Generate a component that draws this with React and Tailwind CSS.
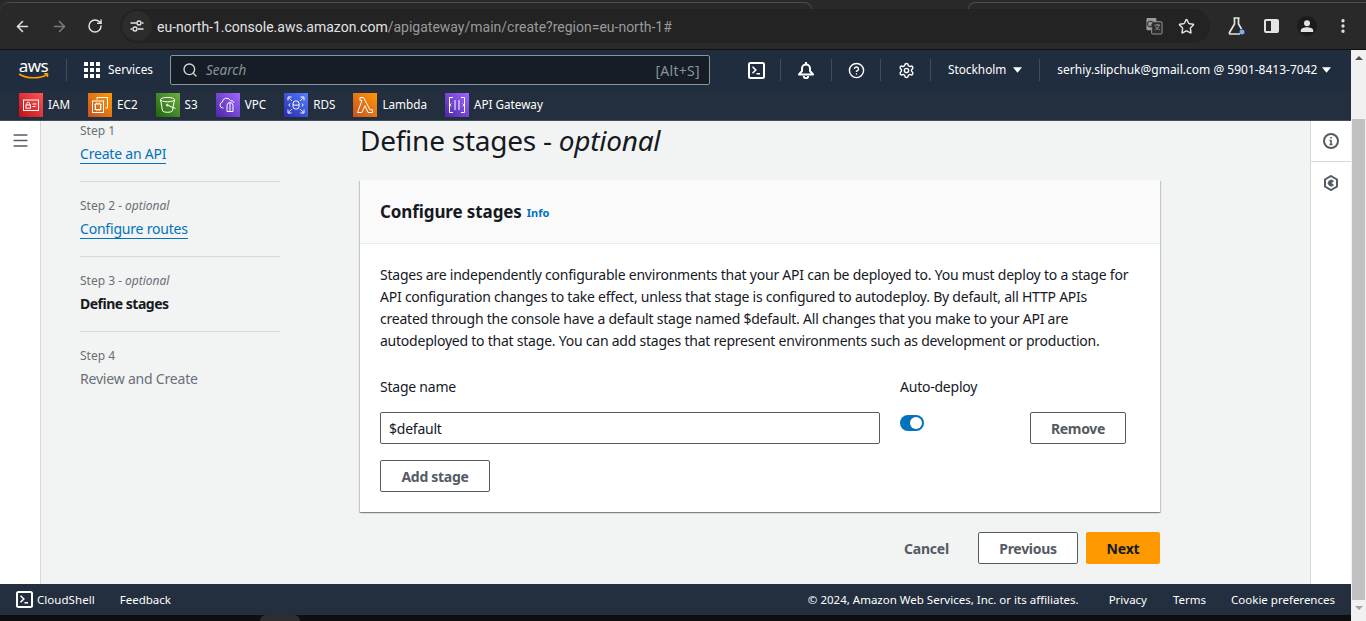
import { ArrowLeft, ArrowRight, RotateCw, Star, Search, HelpCircle, Settings, Menu, EllipsisVertical } from 'lucide-react';

const shortcuts = [
  { name: 'IAM', tile: 'from-[#bd0816] to-[#ff5252]', icon: 'iam' },
  { name: 'EC2', tile: 'from-[#c8511b] to-[#ff9900]', icon: 'ec2' },
  { name: 'S3', tile: 'from-[#1b660f] to-[#6cae3e]', icon: 's3' },
  { name: 'VPC', tile: 'from-[#4d27a8] to-[#a166ff]', icon: 'vpc' },
  { name: 'RDS', tile: 'from-[#2e27ad] to-[#527fff]', icon: 'rds' },
  { name: 'Lambda', tile: 'from-[#c8511b] to-[#ff9900]', icon: 'lambda' },
  { name: 'API Gateway', tile: 'from-[#4d27a8] to-[#a166ff]', icon: 'api' },
];

function TileIcon({ icon }) {
  const common = { width: 18, height: 18, viewBox: '0 0 18 18', fill: 'none', stroke: 'white', strokeWidth: 1 };
  if (icon === 'iam') return (
    <svg {...common}>
      <rect x="1.5" y="4" width="15" height="10.5" />
      <rect x="4" y="9" width="4.5" height="3.2" />
      <path d="M4.9 9V7.6a1.3 1.3 0 0 1 2.7 0V9M10.5 8h4M10.5 10.5h3" />
    </svg>
  );
  if (icon === 'ec2') return (
    <svg {...common}>
      <path d="M6 3.5V1.5h10.5V12h-2" />
      <rect x="1.5" y="5" width="11" height="11.5" />
      <rect x="4.5" y="8" width="5" height="5.5" />
      <path d="M3 8.5h1.5M3 10.7h1.5M3 13h1.5M9.5 8.5H11M9.5 10.7H11M9.5 13H11M5.5 6.5V8M7 6.5V8M8.5 6.5V8M5.5 13.5V15M7 13.5V15M8.5 13.5V15" strokeWidth="0.7" />
    </svg>
  );
  if (icon === 's3') return (
    <svg {...common}>
      <ellipse cx="8.5" cy="3.6" rx="7" ry="2.2" />
      <path d="M1.5 3.6 3.6 15a5 1.6 0 0 0 9.8 0l2.1-11.4" />
      <path d="M8.5 9.2 16.5 12.5" />
      <circle cx="8.3" cy="9.1" r="0.9" />
    </svg>
  );
  if (icon === 'vpc') return (
    <svg {...common}>
      <path d="M4.5 12H3.8a3 3 0 0 1-.5-5.9 4.2 4.2 0 0 1 8-1.5 3.2 3.2 0 0 1 3.7 2.3" />
      <path d="M8 15.5V9.5a3 3 0 0 1 6 0v6z" />
      <path d="M11 7v8.500" />
    </svg>
  );
  if (icon === 'rds') return (
    <svg {...common}>
      <path d="M1 4.500V1h3.500M13.500 1H17v3.500M17 13.500V17h-3.500M4.500 17H1v-3.500" />
      <path d="M1.500 1.500 5 5M16.500 1.500 13 5M16.500 16.500 13 13M1.500 16.500 5 13" strokeWidth="0.8" />
      <rect x="6" y="5" width="6" height="8" rx="2.500" />
      <path d="M6 8.500c1.500 1 4.500 1 6 0M3 7.500 1.800 9 3 10.500M15 7.500 16.200 9 15 10.500" />
    </svg>
  );
  if (icon === 'lambda') return (
    <svg {...common}>
      <path d="M1.500 16.500h4.300l3.200-6.800 3 6.800h4.500v-2.800h-2.500L7.500 1.500H4v2.800h2z" />
    </svg>
  );
  return (
    <svg {...common}>
      <path d="M5 1.500H1.500v15H5M13 1.500h3.500v15H13" />
      <path d="M7 4v10M11 4v10" />
      <path d="M3.500 7.500 2 9l1.500 1.500M14.500 7.500 16 9l-1.500 1.500" strokeWidth="0.8" />
    </svg>
  );
}

function TerminalIcon() {
  return (
    <svg width="17" height="17" viewBox="0 0 17 17" fill="none" stroke="white" strokeWidth="2">
      <rect x="1" y="1" width="15" height="15" rx="1.500" />
      <path d="M4.500 4.800 7.800 8 4.500 11.200M8.500 11.800h3.500" strokeWidth="1.600" />
    </svg>
  );
}

function BellIcon() {
  return (
    <svg width="16" height="17" viewBox="0 0 16 17" fill="none" stroke="white" strokeWidth="2">
      <path d="M8 0v2" />
      <path d="M1 12.500 4 9V6.500a4 4 0 0 1 8 0V9l3 3.500z" strokeLinejoin="round" />
      <path d="M5.800 14a2.200 2.200 0 0 0 4.400 0" />
    </svg>
  );
}

function NavSep() {
  return <div className="h-[22px] w-px bg-[#414d5c]" />;
}

function Caret({ size = 'w-[9px] h-[6px]' }) {
  return (
    <svg className={size} viewBox="0 0 10 6" fill="white">
      <path d="M0 0h10L5 6z" />
    </svg>
  );
}

function BrowserBar() {
  return (
    <div className="h-[50px] shrink-0 bg-[#292929] border-b border-[#0f0f0f] flex flex-col">
      <div className="h-[9px] flex">
        <div className="w-[812px] h-[9px] mt-[2px] border-t border-r border-[#4d4d4d] rounded-tr-[8px] rounded-tl-[10px]" />
        <div className="flex-1 ml-[156px] mt-[2px] border-t border-l border-[#4d4d4d] rounded-tl-[8px]" />
      </div>
      <div className="h-[34px] flex items-center text-[#e3e3e3]">
        <div className="w-[120px] flex items-center pl-[14px] gap-[20px]">
          <ArrowLeft size={17} strokeWidth={2.200} color="#e3e3e3" />
          <ArrowRight size={17} strokeWidth={2.200} color="#7b7b7b" />
          <RotateCw size={16} strokeWidth={2.200} color="#e3e3e3" className="-ml-[1px]" />
        </div>
        <div className="w-[1090px] h-[34px] rounded-full bg-[#232323] flex items-center pl-[2px]">
          <div className="w-[30px] h-[30px] rounded-full bg-[#2c2c2c] flex items-center justify-center">
            <svg width="14" height="14" viewBox="0 0 14 14" fill="none" stroke="#e3e3e3" strokeWidth="1.400">
              <path d="M0.500 4h6M12 4h1.500M0.500 10h1.500M8 10h5.500" />
              <circle cx="9" cy="4" r="2" />
              <circle cx="5" cy="10" r="2" />
            </svg>
          </div>
          <div className="ml-[5px] mt-[1px] text-[14px] leading-none whitespace-nowrap font-['Roboto',sans-serif]">
            <span className="text-[#e3e3e3]">eu-north-1.console.aws.amazon.com</span>
            <span className="text-[#9a9a9a]">/apigateway/main/create?region=eu-north-1#</span>
          </div>
          <div className="ml-auto mr-[15px] flex items-center gap-[15px]">
            <svg width="17" height="18" viewBox="0 0 18 18">
              <rect x="0.500" y="0.500" width="10.500" height="13" rx="1" fill="#9b9b9b" />
              <rect x="6" y="4.500" width="11" height="13" rx="1" fill="#2c2c2c" stroke="#9b9b9b" />
              <path d="M9 8h6M12 7v1M14 8c-.5 2.500-2 4-4 5M10 9.500c1 2 2.500 3 4.500 3.500" stroke="#9b9b9b" fill="none" />
              <path d="M7 5a3 3 0 1 0 .500 3H5" stroke="#2c2c2c" strokeWidth="1.200" fill="none" />
            </svg>
            <Star size={17} strokeWidth={2} color="#e3e3e3" />
          </div>
        </div>
        <div className="flex-1 flex items-center pl-[18px]">
          <svg width="17" height="18" viewBox="0 0 17 18" fill="none" stroke="#e3e3e3" strokeWidth="1.700">
            <path d="M5.500 1h6M6.500 1v6L1.500 15.500a1 1 0 0 0 .9 1.500h9.600" />
            <path d="M10.500 1v6l3 5" />
            <circle cx="14" cy="15" r="2.500" fill="#7cacf8" stroke="none" />
          </svg>
          <div className="ml-[19px] w-[15px] h-[14px] border-2 border-[#e3e3e3] rounded-[2px] flex justify-end">
            <div className="w-[6px] bg-[#e3e3e3]" />
          </div>
          <div className="ml-[18px] w-[20px] h-[20px] rounded-full bg-[#1b1b1b] flex items-center justify-center">
            <svg width="14" height="14" viewBox="0 0 14 14" fill="#e3e3e3">
              <circle cx="7" cy="4.200" r="3" />
              <path d="M0.800 13v-1.500c0-2 3.500-3.200 6.200-3.200s6.200 1.200 6.200 3.200V13z" />
            </svg>
          </div>
          <EllipsisVertical size={18} strokeWidth={2.400} color="#e3e3e3" className="ml-[17px]" />
        </div>
      </div>
    </div>
  );
}

function TopNav() {
  return (
    <div className="h-[71px] shrink-0 bg-[#232f3e] border-b border-[#414d5c] text-white">
      <div className="h-[40px] bg-[#1f2d3f] flex items-center pl-[18px]">
        <div className="w-[31px] h-[24px] flex flex-col items-center">
          <span className="text-[17px] leading-[15px] tracking-[-0.5px]">aws</span>
          <svg width="31" height="6" viewBox="0 0 31 6" fill="none" stroke="#ff9900" strokeWidth="1.500">
            <path d="M1 1c8 5 21 5 28 .5M26 .5h3.500V4" />
          </svg>
        </div>
        <div className="ml-[17px] h-[22px] w-px bg-[#414d5c]" />
        <div className="ml-[17px] grid grid-cols-3 gap-[2px]">
          {Array.from({ length: 9 }).map((_, i) => (
            <div key={i} className="w-[4px] h-[4px] bg-white" />
          ))}
        </div>
        <span className="ml-[8px] w-[62px] text-[11.800px]">Services</span>
        <div className="w-[540px] h-[30px] bg-[#161d26] border border-[#879596] rounded-[2px] flex items-center pl-[11px] pr-[9px]">
          <Search size={16} strokeWidth={2} color="#d5dbdb" />
          <span className="ml-[8px] mt-[1px] text-[13.500px] italic text-[#879596]">Search</span>
          <span className="ml-auto mt-[1px] text-[14px] tracking-[0.3px] text-[#879596]">[Alt+S]</span>
        </div>
        <div className="ml-[38px]"><TerminalIcon /></div>
        <div className="ml-[15px]"><NavSep /></div>
        <div className="ml-[17px]"><BellIcon /></div>
        <div className="ml-[17px]"><NavSep /></div>
        <HelpCircle size={17} strokeWidth={2} className="ml-[16px]" />
        <div className="ml-[15px]"><NavSep /></div>
        <Settings size={17} strokeWidth={2} className="ml-[17px]" />
        <div className="ml-[15px]"><NavSep /></div>
        <span className="ml-[17px] text-[11.800px]">Stockholm</span>
        <div className="ml-[7px]"><Caret /></div>
        <div className="ml-[17px]"><NavSep /></div>
        <span className="ml-[17px] text-[12px]">serhiy.slipchuk@gmail.com @ 5901-8413-7042</span>
        <div className="ml-[5px]"><Caret /></div>
      </div>
      <div className="h-[30px] flex items-start pl-[19px] gap-[18px]">
        {shortcuts.map((s) => (
          <div key={s.name} className="flex items-center gap-[5px] mt-[3px]">
            <div className={`w-[24px] h-[24px] bg-linear-to-tr ${s.tile} flex items-center justify-center`}>
              <TileIcon icon={s.icon} />
            </div>
            <span className="text-[11.700px]">{s.name}</span>
          </div>
        ))}
      </div>
    </div>
  );
}

function Step({ label, optional, children, last }) {
  return (
    <div className={last ? 'pt-[16px]' : 'pt-[16px] pb-[16px] border-b border-[#d5dbdb]'}>
      <div className="text-[12px] leading-[16px] text-[#687078]">
        {label}
        {optional && <span className="italic"> - optional</span>}
      </div>
      <div className="mt-[4px] text-[14px] leading-[22px] tracking-[-0.2px]">{children}</div>
    </div>
  );
}

function StepNav() {
  return (
    <div className="w-[200px] ml-[39px] mt-[-14px] shrink-0">
      <Step label="Step 1">
        <span className="text-[#0073bb] border-b border-[#0073bb]">Create an API</span>
      </Step>
      <Step label="Step 2" optional>
        <span className="text-[#0073bb] border-b border-[#0073bb]">Configure routes</span>
      </Step>
      <Step label="Step 3" optional>
        <span className="font-bold tracking-[-0.5px] text-[#16191f]">Define stages</span>
      </Step>
      <Step label="Step 4" last>
        <span className="text-[#687078]">Review and Create</span>
      </Step>
    </div>
  );
}

function Outline({ className, children }) {
  return (
    <div className={`h-[32px] border border-[#545b64] rounded-[2px] bg-white flex items-center justify-center text-[14px] tracking-[-0.3px] font-bold text-[#545b64] ${className}`}>
      {children}
    </div>
  );
}

function StagesCard() {
  return (
    <div className="bg-white shadow-[0_1px_1px_0_rgba(0,28,36,0.3),1px_1px_1px_0_rgba(0,28,36,0.15),-1px_1px_1px_0_rgba(0,28,36,0.15)]">
      <div className="h-[64px] bg-[#fafafa] border-b border-[#eaeded] flex items-center px-[20px]">
        <span className="text-[17px] tracking-[-0.1px] font-bold text-[#16191f]">Configure stages</span>
        <span className="ml-[5px] mt-[3px] text-[11px] font-bold text-[#0073bb]">Info</span>
      </div>
      <div className="px-[20px] pt-[20px] pb-[20px] text-[14px] tracking-[-0.23px]">
        <p className="pr-[8px] leading-[22px] text-[#16191f]">
          Stages are independently configurable environments that your API can be deployed to. You must deploy to a stage for API configuration changes to take effect, unless that stage is configured to autodeploy. By default, all HTTP APIs created through the console have a default stage named $default. All changes that you make to your API are autodeployed to that stage. You can add stages that represent environments such as development or production.
        </p>
        <div className="mt-[24px] flex">
          <div className="w-[500px]">
            <div className="leading-[22px] text-[#16191f]">Stage name</div>
            <div className="h-[32px] mt-[14px] border border-[#545b64] rounded-[2px] flex items-center px-[8px] text-[#16191f]">$default</div>
          </div>
          <div className="ml-[20px] w-[130px]">
            <div className="leading-[22px] text-[#16191f]">Auto-deploy</div>
            <div className="mt-[17px] w-[24px] h-[16px] rounded-full bg-[#0073bb] flex items-center justify-end pr-[2px]">
              <div className="w-[12px] h-[12px] rounded-full bg-white" />
            </div>
          </div>
          <Outline className="w-[96px] mt-[36px]">Remove</Outline>
        </div>
        <Outline className="w-[110px] mt-[16px]">Add stage</Outline>
      </div>
    </div>
  );
}

function MainArea() {
  return (
    <div className="flex-1 min-h-0 flex overflow-hidden bg-[#f2f3f3]">
      <div className="w-[41px] shrink-0 bg-white border-r border-[#d5dbdb] flex justify-center pt-[10px]">
        <Menu size={19} strokeWidth={2} color="#545b64" />
      </div>
      <StepNav />
      <div className="ml-[80px] w-[800px] shrink-0">
        <h1 className="mt-[1px] text-[28px] leading-[36px] tracking-[-0.25px] text-[#16191f]">
          Define stages - <span className="italic">optional</span>
        </h1>
        <div className="mt-[22px]"><StagesCard /></div>
        <div className="mt-[20px] flex items-center justify-end">
          <span className="mr-[29px] text-[14px] tracking-[-0.2px] font-bold text-[#545b64]">Cancel</span>
          <Outline className="w-[100px]">Previous</Outline>
          <div className="ml-[8px] w-[74px] h-[32px] rounded-[2px] bg-[#ff9900] flex items-center justify-center text-[14px] tracking-[-0.2px] font-bold text-[#16191f]">Next</div>
        </div>
      </div>
      <div className="ml-auto w-[41px] shrink-0 bg-white border-l border-[#d5dbdb] flex flex-col items-center">
        <div className="h-[41px] w-full border-b border-[#d5dbdb] flex items-center justify-center">
          <svg width="16" height="16" viewBox="0 0 16 16" fill="none" stroke="#545b64" strokeWidth="2">
            <circle cx="8" cy="8" r="7" />
            <path d="M8 7v4.500M6.500 11.500h3M6.500 7.500H8M8 4v1.500" strokeWidth="1.600" />
          </svg>
        </div>
        <div className="h-[41px] flex items-center justify-center">
          <svg width="16" height="16" viewBox="0 0 16 16" fill="none" stroke="#545b64" strokeWidth="2">
            <path d="M8 1l6 3.500v7L8 15l-6-3.500v-7z" />
            <path d="M10.500 6.200A3 3 0 1 0 10.500 10L8 8z" fill="#545b64" strokeWidth="0.800" />
          </svg>
        </div>
      </div>
    </div>
  );
}

function Footer() {
  return (
    <div className="h-[31px] shrink-0 bg-[#232f3e] text-white flex items-center pl-[16px] pr-[16px] text-[11.500px]">
      <TerminalIcon />
      <span className="ml-[4px] tracking-[0.05px]">CloudShell</span>
      <span className="ml-[25px]">Feedback</span>
      <span className="ml-auto">© 2024, Amazon Web Services, Inc. or its affiliates.</span>
      <span className="ml-[30px]">Privacy</span>
      <span className="ml-[26px]">Terms</span>
      <span className="ml-[25px]">Cookie preferences</span>
    </div>
  );
}

function Scrollbar() {
  return (
    <div className="w-[15px] shrink-0 bg-[#f1f1f1] flex flex-col items-center">
      <div className="h-[15px] flex items-center">
        <svg width="8" height="4" viewBox="0 0 8 4" fill="#505050"><path d="M0 4h8L4 0z" /></svg>
      </div>
      <div className="mt-[54px] w-[13px] h-[481px] bg-[#c1c1c1]" />
      <div className="h-[15px] flex items-center">
        <svg width="8" height="4" viewBox="0 0 8 4" fill="#a3a3a3"><path d="M0 0h8L4 4z" /></svg>
      </div>
    </div>
  );
}

export default function App() {
  return (
    <div className="w-[1366px] h-[621px] overflow-hidden flex flex-col bg-[#0e0e0e] font-['Noto_Sans',sans-serif]">
      <BrowserBar />
      <div className="flex-1 min-h-0 flex">
        <div className="flex-1 min-w-0 flex flex-col">
          <TopNav />
          <MainArea />
          <Footer />
          <div className="h-[6px] shrink-0 bg-[#0e0e0e] pl-[260px]">
            <div className="w-[40px] h-[6px] rounded-t-[8px] bg-[#2e2e2e]" />
          </div>
        </div>
        <Scrollbar />
      </div>
    </div>
  );
}
